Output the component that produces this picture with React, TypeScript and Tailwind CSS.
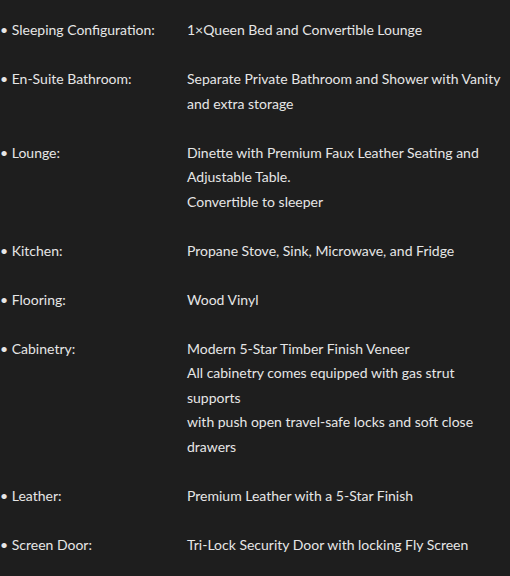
const specs: { label: string; lines: string[] }[] = [
  { label: "Sleeping Configuration:", lines: ["1×Queen Bed and Convertible Lounge"] },
  { label: "En-Suite Bathroom:", lines: ["Separate Private Bathroom and Shower with Vanity and extra storage"] },
  {
    label: "Lounge:",
    lines: ["Dinette with Premium Faux Leather Seating and Adjustable Table.", "Convertible to sleeper"],
  },
  { label: "Kitchen:", lines: ["Propane Stove, Sink, Microwave, and Fridge"] },
  { label: "Flooring:", lines: ["Wood Vinyl"] },
  {
    label: "Cabinetry:",
    lines: [
      "Modern 5-Star Timber Finish Veneer",
      "All cabinetry comes equipped with gas strut supports",
      "with push open travel-safe locks and soft close drawers",
    ],
  },
  { label: "Leather:", lines: ["Premium Leather with a 5-Star Finish"] },
  { label: "Screen Door:", lines: ["Tri-Lock Security Door with locking Fly Screen"] },
];

export default function App() {
  return (
    <div className="min-h-screen w-[510px] h-[576px] overflow-hidden bg-[#1e1e1e] pt-[18px] font-['Lato',sans-serif] text-[14px] leading-[24.5px] text-[#e6e6e6]">
      {specs.map((s) => (
        <div key={s.label} className="mb-[24.5px] grid grid-cols-[187px_1fr]">
          <div className="whitespace-nowrap">• {s.label}</div>
          <div>
            {s.lines.map((l) => (
              <p key={l}>{l}</p>
            ))}
          </div>
        </div>
      ))}
    </div>
  );
}
